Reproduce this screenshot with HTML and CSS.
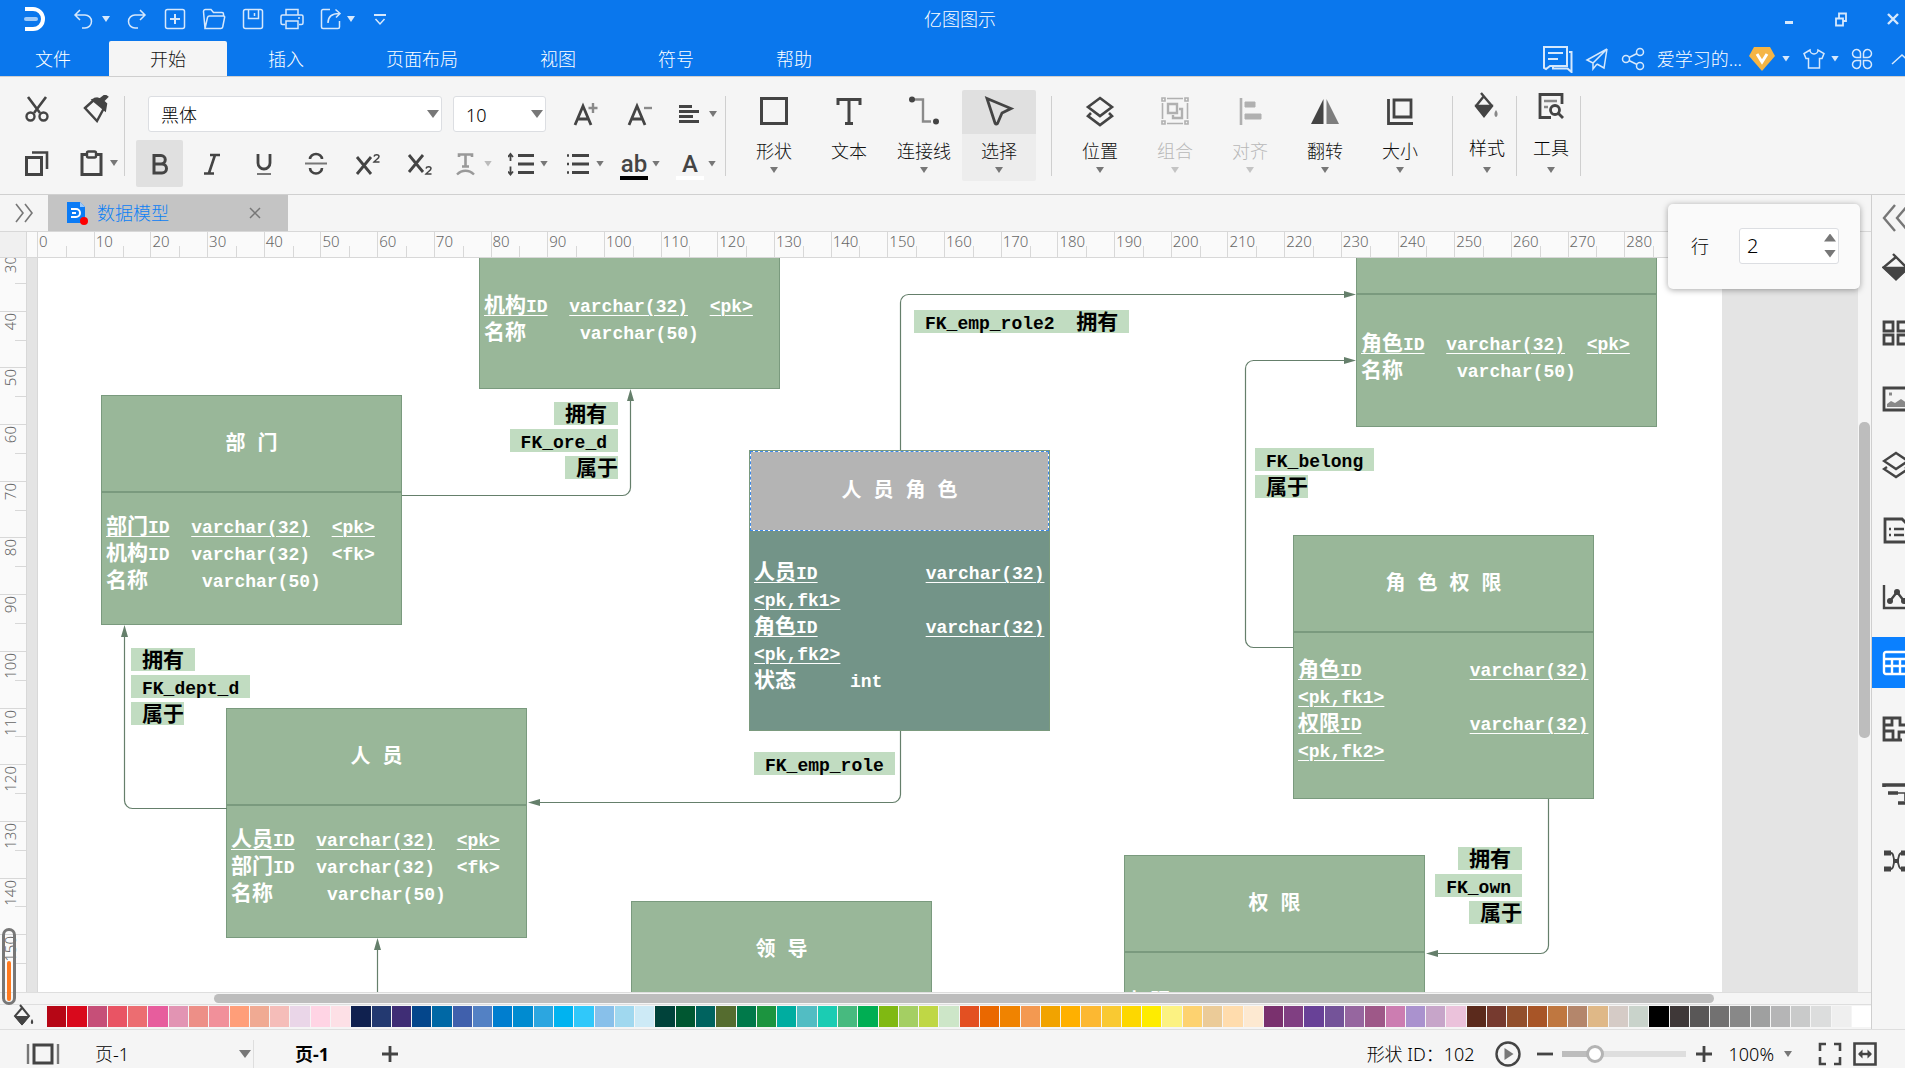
FILE: index.html
```html
<!DOCTYPE html>
<html lang="zh-CN">
<head>
<meta charset="utf-8">
<title>亿图图示</title>
<link rel="stylesheet" href="styles.css">
</head>
<body>
<header class="header">
  <div class="titlebar">
    <div class="quick">
      <svg class="logo" width="24" height="26" viewBox="0 0 24 26"><path d="M1 3h8a10 10 0 0 1 0 20H1" fill="none" stroke="#fff" stroke-width="4"/><path d="M2 13h10" stroke="#9fcaf8" stroke-width="4" stroke-linecap="round"/></svg>
      <button class="q-undo" aria-label="撤销"><svg width="22" height="22" viewBox="0 0 22 22"><path d="M7 2L2 7l5 5M2 7h10a6.500 6.500 0 0 1 0 13H9"/></svg></button>
      <button class="q-caret" aria-label="撤销列表"><i class="caret light"></i></button>
      <button class="q" aria-label="重做"><svg width="22" height="22" viewBox="0 0 22 22"><path d="M15 2l5 5-5 5M20 7H10a6.500 6.500 0 0 0 0 13h3"/></svg></button>
      <button class="q" aria-label="新建"><svg width="22" height="22" viewBox="0 0 22 22"><rect x="1.500" y="1.500" width="19" height="19" rx="2"/><path d="M11 6v10M6 11h10" stroke-width="2"/></svg></button>
      <button class="q" aria-label="打开"><svg width="24" height="22" viewBox="0 0 24 22"><path d="M3 20.500L1.500 3.500a2 2 0 0 1 2-2H9l2.500 3H20a1.500 1.500 0 0 1 1.500 1.500v2M3 20.500L5.500 9.500a2 2 0 0 1 2-1.500H22l.7 1-2 10a2 2 0 0 1-2 1.500z"/></svg></button>
      <button class="q" aria-label="保存"><svg width="22" height="22" viewBox="0 0 22 22"><rect x="1.500" y="1.500" width="19" height="19" rx="2"/><path d="M6.500 2v8.500h10V2M12.500 5v3"/></svg></button>
      <button class="q" aria-label="打印"><svg width="24" height="22" viewBox="0 0 24 22"><path d="M6 7V1.500h12V7M5 16.500H2.500a1.500 1.500 0 0 1-1.500-1.500V8.500A1.500 1.500 0 0 1 2.500 7h19A1.500 1.500 0 0 1 23 8.500V15a1.500 1.500 0 0 1-1.500 1.500H19M6 13h12v7.500H6zM18 10h2"/></svg></button>
      <button class="q q-export" aria-label="导出"><svg width="22" height="22" viewBox="0 0 22 22"><path d="M10 1.500H3A1.500 1.500 0 0 0 1.500 3v16A1.500 1.500 0 0 0 3 20.500h15a1.500 1.500 0 0 0 1.500-1.500v-6M8 15c0-6 4-9.500 11-9.500M15.500 1.500L20 5.500l-4 4"/></svg></button>
      <button class="q-caret" aria-label="导出列表"><i class="caret light"></i></button>
      <button class="q-more" aria-label="自定义"><svg width="14" height="14" viewBox="0 0 14 14"><path d="M1 3h12" stroke-width="2"/><path d="M2.500 7l4.500 5 4.500-5"/></svg></button>
    </div>
    <h1 class="app-title">亿图图示</h1>
    <div class="win">
      <button aria-label="最小化"><svg width="24" height="20" viewBox="0 0 24 20"><path d="M8 13.500h8" stroke-width="3"/></svg></button>
      <button aria-label="还原"><svg width="24" height="20" viewBox="0 0 24 20"><path d="M7 9.500h7v7H7zM10 9V4.500h7V12h-3" stroke-width="1.800"/></svg></button>
      <button aria-label="关闭"><svg width="24" height="20" viewBox="0 0 24 20"><path d="M7 5l10 10M17 5L7 15" stroke-width="2.400"/></svg></button>
    </div>
  </div>
  <div class="menubar">
    <nav class="tabs">
      <a class="tab file" href="#file">文件</a>
      <a class="tab active" href="#home">开始</a>
      <a class="tab" href="#insert">插入</a>
      <a class="tab" href="#layout">页面布局</a>
      <a class="tab" href="#view">视图</a>
      <a class="tab" href="#symbol">符号</a>
      <a class="tab" href="#help">帮助</a>
    </nav>
    <div class="account">
      <button aria-label="评论"><svg width="31" height="28" viewBox="0 0 31 28"><path d="M2 2h23v19H8l-4 3-2-1z" stroke-width="2"/><path d="M6 8h15M6 14h10" stroke-width="2.200"/><path d="M27 7h2.500v20l-4-3.500H11V21" stroke-width="2"/></svg></button>
      <button aria-label="发送"><svg width="24" height="24" viewBox="0 0 24 24"><path d="M22 2L2 13l6 3zM22 2l-3 19-7-4M22 2L8 16M8 16v6l4-5"/></svg></button>
      <button aria-label="分享"><svg width="24" height="24" viewBox="0 0 24 24"><circle cx="5" cy="12" r="3.500"/><circle cx="19" cy="5" r="3.500"/><circle cx="19" cy="19" r="3.500"/><path d="M8 10.500l8-4M8 13.500l8 4"/></svg></button>
      <button class="user">爱学习的...<svg width="28" height="26" viewBox="0 0 28 26"><path d="M6 1h16l5 9-13 15L1 10z" fill="#f5b545" stroke="none"/><path d="M9 8l5 8 5-8" stroke="#fff" stroke-width="3"/></svg><i class="caret light"></i></button>
      <button class="skin" aria-label="皮肤"><svg width="24" height="24" viewBox="0 0 24 24"><path d="M8 3L2 6.500l2 5h2.500V21h11v-9.500H20l2-5L16 3a4 4 0 0 1-8 0z"/></svg><i class="caret light"></i></button>
      <button aria-label="应用"><svg width="22" height="22" viewBox="0 0 22 22"><path d="M9.500 9.500H6a4 4 0 1 1 3.500-4zM12.500 9.500H16a4 4 0 1 0-3.500-4zM9.500 12.500H6a4 4 0 1 0 3.500 4zM12.500 12.500H16a4 4 0 1 1-3.500 4z"/></svg></button>
      <button class="collapse" aria-label="收起"><svg width="14" height="14" viewBox="0 0 14 14"><path d="M1 12L11 3l10 9"/></svg></button>
    </div>
  </div>
</header>

<section class="ribbon" aria-label="开始">
  <div class="group clip">
    <button aria-label="剪切"><svg width="28" height="28" viewBox="0 0 28 28"><path d="M5 2l12 16M23 2L11 18" stroke-width="2.600"/><circle cx="7.500" cy="21.500" r="4"/><circle cx="20.500" cy="21.500" r="4"/></svg></button>
    <button aria-label="格式刷"><svg width="28" height="28" viewBox="0 0 28 28"><path d="M4 13L14 4l9 9-7 13z"/><path d="M12 5l12 10 1-6-3-3 4-4-2-1.500-5 4-3-1z" fill="#444"/></svg></button>
    <button aria-label="复制"><svg width="28" height="28" viewBox="0 0 28 28"><path d="M3.500 8.500h15v17h-15z" stroke-width="3"/><path d="M9 3.500h15V20" stroke-width="2.600"/></svg></button>
    <button class="drop" aria-label="粘贴"><svg width="28" height="28" viewBox="0 0 28 28"><path d="M9 5.500H4v20h19v-20h-5" stroke-width="3"/><rect x="9" y="2.500" width="9" height="6" rx="1.500"/></svg><i class="caret"></i></button>
  </div>
  <div class="group font">
    <div class="row fields">
      <label class="field name"><select aria-label="字体"><option>黑体</option></select><i class="caret large"></i></label>
      <label class="field size"><select aria-label="字号"><option>10</option></select><i class="caret large"></i></label>
      <button aria-label="增大字号"><svg width="28" height="28" viewBox="0 0 28 28"><path d="M3 25L11 6l8 19M6 19h10" stroke-width="2.800"/><path d="M21 3v10M16.500 8h9" stroke="#8a8a8a" stroke-width="2.400"/></svg></button>
      <button aria-label="减小字号"><svg width="28" height="28" viewBox="0 0 28 28"><path d="M3 25L11 6l8 19M6 19h10" stroke-width="2.800"/><path d="M18 8h8" stroke="#8a8a8a" stroke-width="2.400"/></svg></button>
      <button class="drop align" aria-label="对齐方式"><svg width="28" height="28" viewBox="0 0 28 28"><path d="M2 6.500h13M2 11.500h20M2 16.500h14M2 21.500h20" stroke-width="2.800"/></svg><i class="caret"></i></button>
    </div>
    <div class="row styles">
      <button class="fmt on" aria-label="加粗"><svg width="28" height="28" viewBox="0 0 28 28"><path d="M8 5.500h7a4 4 0 0 1 0 8.500H8zM8 14h8a4.500 4.500 0 0 1 0 9H8z" stroke-width="3"/></svg></button>
      <button class="fmt" aria-label="斜体"><svg width="28" height="28" viewBox="0 0 28 28"><path d="M12 5h10M6 23.500h10M17 5l-6 18" stroke-width="2.600"/></svg></button>
      <button class="fmt" aria-label="下划线"><svg width="28" height="28" viewBox="0 0 28 28"><path d="M8 4v9a6 6 0 0 0 12 0V4" stroke-width="2.800"/><path d="M7 24h14" stroke="#777" stroke-width="2"/></svg></button>
      <button class="fmt" aria-label="删除线"><svg width="28" height="28" viewBox="0 0 28 28"><path d="M20 9a6 5 0 0 0-12 0M8 18a6 5.500 0 0 0 12 0" stroke-width="2.600"/><path d="M3 13.500h22" stroke="#777" stroke-width="2"/></svg></button>
      <button class="fmt" aria-label="上标"><svg width="28" height="28" viewBox="0 0 28 28"><path d="M3 7l14 17M17 7L3 24" stroke-width="2.800"/><path d="M20 6.500c.5-2.500 5-2.500 5 0 0 2-3 3-5 5.500h5.500" stroke-width="1.500"/></svg></button>
      <button class="fmt" aria-label="下标"><svg width="28" height="28" viewBox="0 0 28 28"><path d="M3 5l14 17M17 5L3 22" stroke-width="2.800"/><path d="M20 18.500c.5-2.500 5-2.500 5 0 0 2-3 3-5 5.500h5.500" stroke-width="1.500"/></svg></button>
      <div class="drops">
        <button class="drop dim" aria-label="文字方向"><svg width="28" height="28" viewBox="0 0 28 28"><path d="M7 7V4.500h13V7M13.500 4v12M10 16.500h7" stroke="#999" stroke-width="2.600"/><path d="M5 24.500c5-5 12-5 17 0" stroke="#999"/></svg><i class="caret"></i></button>
        <button class="drop" aria-label="行距"><svg width="28" height="28" viewBox="0 0 28 28"><path d="M10 5.500h16M10 14h16M10 22.500h16" stroke-width="2.800"/><path d="M2.500 4v7M0 7l2.500-3L5 7M2.500 16.500v8M0 21.500l2.500 3 2.500-3" stroke-width="1.800"/></svg><i class="caret"></i></button>
        <button class="drop" aria-label="项目符号"><svg width="28" height="28" viewBox="0 0 28 28"><path d="M8 5.500h17M8 14h17M8 22.500h17" stroke-width="2.800"/><path d="M3 5.500h2M3 14h2M3 22.500h2" stroke-width="2.600"/></svg><i class="caret"></i></button>
        <button class="drop letters" aria-label="突出显示"><span class="glyph black">ab</span><i class="caret"></i></button>
        <button class="drop letters" aria-label="字体颜色"><span class="glyph white">A</span><i class="caret"></i></button>
      </div>
    </div>
  </div>
  <div class="group tools">
    <button class="tool"><svg width="32" height="32" viewBox="0 0 32 32"><path d="M3.500 3.500h25v25h-25z" stroke-width="3"/></svg><span>形状</span><i class="caret"></i></button>
    <button class="tool"><svg width="32" height="32" viewBox="0 0 32 32"><path d="M5 10V4.500h22V10M16 4v24M12 28.500h8" stroke-width="3"/></svg><span>文本</span></button>
    <button class="tool"><svg width="32" height="32" viewBox="0 0 32 32"><path d="M6 4.500h9v22h8" stroke="#8a8a8a" stroke-width="2.400"/><circle cx="4" cy="4.500" r="3" fill="#444" stroke="none"/><circle cx="28" cy="26.500" r="3" fill="#444" stroke="none"/></svg><span>连接线</span><i class="caret"></i></button>
    <button class="tool selected"><svg width="32" height="32" viewBox="0 0 32 32"><path d="M4 3.500l24 10-9 4.500-4.500 10.500q-1.500 1.500-2.500-.5z" stroke-width="2.800"/></svg><span>选择</span><i class="caret"></i></button>
  </div>
  <div class="group tools">
    <button class="tool"><svg width="32" height="32" viewBox="0 0 32 32"><path d="M16 3l12 9-12 9-12-9z" stroke-width="2.600"/><path d="M7 18l-3 3 12 9 12-9-3-3" stroke-width="2.600"/></svg><span>位置</span><i class="caret"></i></button>
    <button class="tool off" disabled><svg width="32" height="32" viewBox="0 0 32 32"><path d="M3 3h3v3H3zM26 3h3v3h-3zM3 26h3v3H3zM26 26h3v3h-3zM8 3.500h16M8 28.500h16M3.500 8v16M28.500 8v16" stroke-width="1.600"/><path d="M9 9h9v9H9zM20 14h3v9h-9v-3" stroke-width="2.400"/></svg><span>组合</span><i class="caret"></i></button>
    <button class="tool off" disabled><svg width="32" height="32" viewBox="0 0 32 32"><path d="M7 3v27" stroke-width="2.600"/><path d="M11 7h10v5H11zM11 19h16v5H11z" fill="#b0b0b0" stroke-width="1"/></svg><span>对齐</span><i class="caret"></i></button>
    <button class="tool"><svg width="32" height="32" viewBox="0 0 32 32"><path d="M14.500 4v25H2z" fill="#444" stroke="none"/><path d="M17.500 4v25H30z" fill="#7d7d7d" stroke="none"/></svg><span>翻转</span><i class="caret"></i></button>
    <button class="tool"><svg width="32" height="32" viewBox="0 0 32 32"><path d="M4.500 4v24.500H29" stroke-width="2.800"/><path d="M10 5h17v17H10z" stroke-width="2.800"/></svg><span>大小</span><i class="caret"></i></button>
  </div>
  <div class="group tools slim">
    <button class="tool"><svg width="28" height="28" viewBox="0 0 28 28"><path d="M8 1l11 13-8 10-8-10 8-10" stroke-width="2.400"/><path d="M4 14h14l-7 9z" fill="#444"/><path d="M23 18c3 4 1 7 0 7s-3-3 0-7z" fill="#888" stroke="none"/></svg><span>样式</span><i class="caret"></i></button>
  </div>
  <div class="group tools slim">
    <button class="tool"><svg width="28" height="28" viewBox="0 0 28 28"><path d="M25 12V2.500H3v23h11" stroke-width="2.800"/><path d="M7 9h13M7 15h4" stroke="#888" stroke-width="2.600"/><circle cx="18" cy="18" r="4.500" stroke-width="2.800"/><path d="M21 21l5 5" stroke-width="2.800"/></svg><span>工具</span><i class="caret"></i></button>
  </div>
</section>

<main class="work">
  <div class="editor">
    <div class="doc-tabs">
      <button class="expand" aria-label="展开"><svg width="20" height="20" viewBox="0 0 20 20"><path d="M2 1l7 9-7 9M11 1l7 9-7 9"/></svg></button>
      <div class="doc-tab">
        <svg width="24" height="24" viewBox="0 0 24 24"><path d="M3 1h13l5 5v16H3z" fill="#0b7bf5"/><path d="M16 1l5 5h-5z" fill="#9fcaf8"/><path d="M7 8h5a4 4 0 0 1 0 8H7M8 12h4" fill="none" stroke="#fff" stroke-width="2"/><circle cx="20" cy="20" r="4" fill="#f00"/></svg>
        <a href="#doc">数据模型</a>
        <button aria-label="关闭文档"><svg width="12" height="12" viewBox="0 0 12 12"><path d="M1 1l10 10M11 1L1 11"/></svg></button>
      </div>
    </div>
    <div class="rulers-top"><div class="corner"></div><ol class="ruler-h" id="ruler-h"></ol></div>
    <div class="view">
      <ol class="ruler-v" id="ruler-v"></ol>
      <div class="canvas">
        <div class="sheet">
          <section class="node two-rows n-org"><h2>机 构</h2><pre><u><b>机构</b>ID</u>  <u>varchar(32)</u>  <u>&lt;pk&gt;</u>
<b>名称</b>     varchar(50)</pre></section>
          <section class="node n-dept"><h2>部 门</h2><pre><u><b>部门</b>ID</u>  <u>varchar(32)</u>  <u>&lt;pk&gt;</u>
<b>机构</b>ID  varchar(32)  &lt;fk&gt;
<b>名称</b>     varchar(50)</pre></section>
          <section class="node n-emprole"><h2>人 员 角 色</h2><pre><u><b>人员</b>ID</u>          <u>varchar(32)</u>
<u>&lt;pk,fk1&gt;</u>
<u><b>角色</b>ID</u>          <u>varchar(32)</u>
<u>&lt;pk,fk2&gt;</u>
<b>状态</b>     int</pre></section>
          <section class="node n-emp"><h2>人 员</h2><pre><u><b>人员</b>ID</u>  <u>varchar(32)</u>  <u>&lt;pk&gt;</u>
<b>部门</b>ID  varchar(32)  &lt;fk&gt;
<b>名称</b>     varchar(50)</pre></section>
          <section class="node two-rows n-role"><h2>角 色</h2><pre><u><b>角色</b>ID</u>  <u>varchar(32)</u>  <u>&lt;pk&gt;</u>
<b>名称</b>     varchar(50)</pre></section>
          <section class="node n-roleperm"><h2>角 色 权 限</h2><pre><u><b>角色</b>ID</u>          <u>varchar(32)</u>
<u>&lt;pk,fk1&gt;</u>
<u><b>权限</b>ID</u>          <u>varchar(32)</u>
<u>&lt;pk,fk2&gt;</u></pre></section>
          <section class="node n-lead"><h2>领 导</h2></section>
          <section class="node two-rows n-perm"><h2>权 限</h2><pre><u><b>权限</b>ID</u>  <u>varchar(32)</u>  <u>&lt;pk&gt;</u>
<b>名称</b>     varchar(50)</pre></section>

          <svg class="wires" width="1684" height="760" viewBox="38 258 1684 760">
            <path d="M402 495.500H622.500a8 8 0 0 0 8-8V398M227 808.500H132.500a8 8 0 0 1-8-8V634M900.500 450V302.500a8 8 0 0 1 8-8H1346M900.500 731V794.500a8 8 0 0 1-8 8H538M1293 647.500H1253.500a8 8 0 0 1-8-8V368.500a8 8 0 0 1 8-8H1346M1548.500 799V945.500a8 8 0 0 1-8 8H1436M377.500 1018V948"/>
            <path class="heads" d="M630.500 389l3.500 12h-7zM124.500 625l3.500 12h-7zM1356 294.500l-12-3.500v7zM528 802.500l12-3.500v7zM1356 360.500l-12-3.500v7zM1426 953.500l12-3.500v7zM377.500 938l3.500 12h-7z"/>
          </svg>

          <div class="tag right t-org"><span>拥有</span><span><code>FK_ore_d</code></span><span class="tight">属于</span></div>
          <div class="tag t-dept"><span>拥有</span><span><code>FK_dept_d</code></span><span class="tight">属于</span></div>
          <div class="tag t-emprole"><span><code>FK_emp_role</code></span></div>
          <div class="tag t-emprole2"><span><code>FK_emp_role2  </code>拥有</span></div>
          <div class="tag t-belong"><span><code>FK_belong</code></span><span class="tight">属于</span></div>
          <div class="tag right t-own"><span>拥有</span><span><code>FK_own</code></span><span class="tight">属于</span></div>
        </div>
      </div>
      <div class="vscroll"><div class="thumb"></div></div>
      <div class="level"><div class="level-bar"></div></div>
    </div>
    <div class="hscroll"><div class="thumb"></div></div>
    <div class="palette">
      <button class="fill" aria-label="填充"><svg width="24" height="24" viewBox="0 0 24 24"><path d="M8 1l9 11-7 8-7-8 7-8" stroke-width="2"/><path d="M3 12.500h14L10 21z" fill="#444" stroke-width="1"/><path d="M20 15c2 3 1 5 0 5s-2-2 0-5z" fill="#444" stroke="none"/></svg></button>
      <div class="swatches" id="swatches"></div>
    </div>
    <form class="popup">
      <label for="rows">行</label>
      <div class="spin"><input id="rows" type="number" value="2"><div class="steps"><button type="button" aria-label="增加"><i class="caret large up"></i></button><button type="button" aria-label="减少"><i class="caret large"></i></button></div></div>
    </form>
  </div>
  <aside class="side">
    <button class="back" aria-label="展开面板"><svg width="30" height="28" viewBox="0 0 30 28"><path d="M13 1L2 14l11 13M26 1L15 14l11 13" stroke="#777"/></svg></button>
    <button aria-label="填充"><svg width="28" height="28" viewBox="0 0 28 28"><path d="M11 1l14 14-11 11L2 14 14 4"/><path d="M2 15h24L14 26z" fill="#444"/></svg></button>
    <button aria-label="符号库"><svg width="28" height="28" viewBox="0 0 28 28"><path d="M2 3h9v9H2zM16 3h9v9h-9zM2 16h9v9H2zM16 16h9v9h-9z" stroke-width="2.800"/></svg></button>
    <button aria-label="图片"><svg width="28" height="28" viewBox="0 0 28 28"><path d="M2 3h24v22H2z" stroke-width="2.800"/><path d="M5 22v-3l4-3 4 2 6-4 7 5v3z" fill="#888" stroke="none"/><path d="M7 9h3" stroke="#888" stroke-width="3"/></svg></button>
    <button aria-label="图层"><svg width="28" height="28" viewBox="0 0 28 28"><path d="M14 2l12 8-12 8-12-8z"/><path d="M5 16l-3 2 12 8 12-8-3-2"/></svg></button>
    <button aria-label="备注"><svg width="28" height="28" viewBox="0 0 28 28"><path d="M3 2h17l5 5v18H3z" stroke-width="2.800"/><path d="M7 12h2M7 18h2M12 12h10M12 18h10"/></svg></button>
    <button aria-label="图表"><svg width="28" height="28" viewBox="0 0 28 28"><path d="M2 2v23h26M8 18l7-9 7 9"/><circle cx="8" cy="18" r="3" fill="#444" stroke="none"/><circle cx="15" cy="9" r="3" fill="#444" stroke="none"/><circle cx="22" cy="18" r="3" fill="#444" stroke="none"/></svg></button>
    <button class="on" aria-label="表格"><svg width="28" height="28" viewBox="0 0 28 28"><rect x="2" y="3" width="26" height="22" rx="2"/><path d="M2 10h26M2 17h26M10 10v15M18 10v15"/></svg></button>
    <button aria-label="排列"><svg width="28" height="28" viewBox="0 0 28 28"><path d="M20 25H2V3h16v7h8M2 10h8V3M2 16h9v9M17 25v-8h9" stroke-width="2.800"/></svg></button>
    <button aria-label="甘特图"><svg width="28" height="28" viewBox="0 0 28 28"><path d="M2 6V4h24M6 12h10M16 22h12" stroke-width="3.600"/><path d="M15 12h8v8" stroke-width="1.600"/></svg></button>
    <button aria-label="脑图"><svg width="28" height="28" viewBox="0 0 28 28"><path d="M2 6h7M2 22h7M19 6h8M19 22h8" stroke-width="5"/><path d="M9 6c4 0 1 8 5 8s1-8 6-8M9 22c4 0 1-8 5-8s1 8 6 8" stroke-width="1.800"/><path d="M11 14h6" stroke-width="4"/></svg></button>
  </aside>
</main>

<footer class="status">
  <button class="pages" aria-label="页面视图"><svg width="34" height="24" viewBox="0 0 34 24"><path d="M8 3h18v18H8z" stroke-width="3"/><path d="M2 2v20M32 2v20" stroke="#777" stroke-width="2.400"/></svg></button>
  <label class="page-pick"><select aria-label="页面"><option>页-1</option></select><i class="caret large"></i></label>
  <a class="page-tab" href="#page1">页-1</a>
  <button class="add" aria-label="添加页面"><svg width="18" height="18" viewBox="0 0 18 18"><path d="M9 1v16M1 9h16" stroke-width="2.800"/></svg></button>
  <span class="shape-id">形状 ID：102</span>
  <button aria-label="播放"><svg width="26" height="26" viewBox="0 0 26 26"><circle cx="13" cy="13" r="11.500"/><path d="M9.500 7l9 6-9 6z" fill="#777" stroke="none"/></svg></button>
  <button class="zoom-out" aria-label="缩小"><svg width="16" height="16" viewBox="0 0 16 16"><path d="M0 8h16" stroke-width="2.800"/></svg></button>
  <input class="zoom" type="range" min="0" max="100" value="23" aria-label="缩放">
  <button aria-label="放大"><svg width="16" height="16" viewBox="0 0 16 16"><path d="M8 0v16M0 8h16" stroke-width="2.800"/></svg></button>
  <button class="percent">100%<i class="caret"></i></button>
  <button class="full" aria-label="全屏"><svg width="24" height="24" viewBox="0 0 24 24"><path d="M2 9V2h6M16 2h6v7M22 15v7h-6M8 22H2v-7" stroke-width="2.600"/></svg></button>
  <button aria-label="适应宽度"><svg width="24" height="24" viewBox="0 0 24 24"><path d="M1.500 1.500h21v21h-21z" stroke-width="2.600"/><path d="M6 12h12"/><path d="M9.500 7.500L5 12l4.500 4.500zM14.500 7.500L19 12l-4.500 4.500z" fill="#444" stroke="none"/></svg></button>
</footer>
<script src="script.js"></script>
</body>
</html>
```
FILE: styles.css
```css
* { box-sizing: border-box; }

body {
  margin: 0;
  height: 100vh;
  display: flex;
  flex-direction: column;
  overflow: hidden;
  background: #f5f5f5;
  color: #111;
  font: 300 18px/24px "Noto Sans", "Noto Sans CJK SC", sans-serif;
}

button, select, input { font: inherit; color: inherit; }
button { border: 0; padding: 0; background: none; display: flex; align-items: center; justify-content: center; }
a { color: inherit; text-decoration: none; }
h1, h2, pre, ol { margin: 0; padding: 0; list-style: none; }
svg { flex: none; display: block; fill: none; stroke: #444; stroke-width: 2.4; }
i { font-style: normal; }

.caret { flex: none; width: 8px; height: 6px; background: #777; clip-path: polygon(0 0, 100% 0, 50% 100%); }
.caret.large { width: 12px; height: 8px; }
.caret.light { background: #d6e8fc; }
.caret.up { clip-path: polygon(50% 0, 100% 100%, 0 100%); }

/* header */
.header { flex: none; background: #0a77ed; color: #fff; border-bottom: 1px solid #cfcfcf; }
.header svg { stroke: #d6e8fc; stroke-width: 1.5; }
.titlebar { height: 41px; padding: 0 0 3px 15px; display: grid; grid-template-columns: 1fr auto 1fr; align-items: center; }
.quick { display: flex; align-items: center; height: 36px; }
.logo { margin: 0 24px 0 9px; }
.q-undo { width: 24px; }
.q-caret { width: 20px; }
.q { width: 39px; }
.q-export { margin-right: -9px; }
.q-more { width: 38px; }
.app-title { font-size: 18px; font-weight: 300; }
.win { display: flex; justify-content: flex-end; gap: 28px; }
.menubar { display: flex; justify-content: space-between; height: 35px; overflow: hidden; }
.tabs { display: flex; }
.tab { padding: 6px 41px 0; border-radius: 2px 2px 0 0; }
.tab.file { padding: 6px 38px 0 35px; }
.tab.active { background: #f5f5f5; color: #111; }
.account { display: flex; align-items: center; gap: 12px; }
.user { gap: 6px; }
.skin { gap: 5px; }
.collapse { margin-left: 6px; }

/* ribbon */
.ribbon { flex: none; height: 118px; padding-top: 13px; display: flex; border-bottom: 1px solid #d0d0d0; }
.group { position: relative; height: 98px; }
.group::after { content: ""; position: absolute; right: 0; top: 6px; height: 80px; width: 1px; background: #cfcfcf; }
.clip { width: 125px; padding-left: 20px; display: grid; grid-template-columns: 58px 44px; grid-template-rows: 37px 72px; align-items: center; justify-items: start; }
.clip button { min-width: 34px; }
.drop { gap: 4px; }
.font { width: 601px; display: flex; flex-direction: column; gap: 8px; padding: 6px 9px 0 11px; }
.row { display: flex; align-items: center; }
.fields { height: 36px; padding-left: 12px; gap: 26px; }
.align { margin-left: -3px; }
.field { position: relative; display: flex; align-items: center; height: 36px; background: #fff; border: 1px solid #dcdee2; border-radius: 3px; }
.field .caret { position: absolute; right: 2px; }
.field.name { width: 294px; margin-right: -15px; }
.field.size { width: 93px; }
.field select { appearance: none; width: 100%; height: 34px; border: 0; background: none; padding: 2px 12px 0; color: #000; }
.fmt { width: 47px; height: 47px; margin-right: 5px; border-radius: 2px; }
.fmt.on { background: #e0e0e0; }
.drops { display: flex; gap: 16px; padding-left: 4px; }
.drops .drop { width: 40px; }
.dim .caret { background: #bbb; }
.letters .glyph { width: 28px; height: 32px; font: 500 24px/32px Roboto, sans-serif; color: #444; border-bottom: 4px solid; text-align: center; }
.letters .black { border-color: #000; }
.letters .white { border-color: #fff; }
.tools { display: flex; padding: 0 16px 0 11px; gap: 1px; }
.tool { width: 74px; height: 91px; flex-direction: column; justify-content: flex-start; padding-top: 5px; border-radius: 2px; }
.tool span { margin-top: 12px; }
.tool .caret { margin-top: 4px; }
.tool.selected { background: linear-gradient(#e0e0e0 44px, #ededed 44px); }
.tool.off { color: #b8b8b8; }
.tool.off svg { stroke: #b0b0b0; }
.tool.off .caret { background: #c4c4c4; }
.tools.slim { padding: 0 0 0 5px; width: 64px; }
.slim .tool { width: 58px; padding-top: 2px; color: #000; }
.slim .tool span { margin-top: 16px; }
.slim .tool .caret { margin-top: 7px; }

/* work area */
.work { flex: 1; min-height: 0; display: flex; }
.editor { position: relative; flex: 1; min-width: 0; display: flex; flex-direction: column; }
.doc-tabs { flex: none; display: flex; height: 37px; border-bottom: 1px solid #d8d8d8; }
.expand { width: 48px; }
.expand svg { stroke: #777; stroke-width: 1.6; }
.doc-tab { display: flex; align-items: center; gap: 9px; width: 240px; padding: 0 27px 0 16px; background: #c4c4c4; color: #0b80f5; }
.doc-tab svg { stroke: none; }
.doc-tab button { margin-left: auto; }
.doc-tab button svg { stroke: #777; stroke-width: 1.5; }

.rulers-top { flex: none; display: flex; height: 26px; overflow: hidden; border-bottom: 1px solid #d8d8d8; background: #fafafa; margin-right: 13px; }
.corner { flex: none; width: 27px; background: #f0f0f0; border-right: 1px solid #d8d8d8; }
.ruler-h { flex: 1; display: flex; padding-left: 10px; overflow: hidden; }
.ruler-h li, .ruler-v li { flex: none; position: relative; color: #666; font-size: 15px; line-height: 18px; }
.ruler-h li { width: 15mm; padding-left: 1px; border-left: 1px solid #d8d8d8; }
.ruler-h li::after { content: ""; position: absolute; left: 50%; bottom: 0; width: 1px; height: 11px; background: #d8d8d8; }
.view { position: relative; flex: 1; min-height: 0; display: flex; }
.ruler-v { flex: none; width: 27px; overflow: hidden; background: #fafafa; border-right: 1px solid #d8d8d8; }
.ruler-v li { height: 15mm; padding: 1px 0 0 1px; border-top: 1px solid #d8d8d8; }
.ruler-v li:first-child { margin-top: -4px; }
.ruler-v li::after { content: ""; position: absolute; right: 0; top: 50%; width: 11px; height: 1px; background: #d8d8d8; }
.ruler-v span { display: block; writing-mode: sideways-lr; }

/* drawing */
.canvas { flex: 1; min-width: 0; overflow: hidden; padding-left: 10px; background: #e4e4e4; }
.sheet { position: relative; width: 1685px; height: 100%; overflow: hidden; background: #fff; border-left: 1px solid #d8d8d8; }
.wires { position: absolute; left: 0; top: 0; stroke: #657f6b; stroke-width: 1.2; }
.wires .heads { fill: #657f6b; stroke: none; }
.node { position: absolute; width: 301px; height: 230px; background: #99b799; border: 1px solid #7a9a7e; color: #fff; }
.node h2 { height: 97px; border-bottom: 2px solid #7a9a7e; font: 700 20px/98px "Liberation Mono", "Noto Sans CJK SC", monospace; text-align: center; }
.node pre { padding: 22px 0 0 4px; font: 700 18px/27px "Liberation Mono", monospace; }
.node b { font: 700 21px/1px "Noto Sans CJK SC", sans-serif; }
.node u { text-decoration-thickness: 1px; text-underline-offset: 3px; }
.two-rows pre { padding-top: 37px; }
.n-org { left: 441px; top: -99px; }
.n-dept { left: 63px; top: 137px; }
.n-emprole { left: 711px; top: 192px; height: 281px; background: #739488; }
.n-emprole h2 { height: 80px; border: 1px dashed #3f8ae8; line-height: 79px; background: linear-gradient(#b4b4b4, #b4b4b4) padding-box, #fff border-box; }
.n-emprole pre { padding-top: 30px; }
.n-emp { left: 188px; top: 450px; }
.n-role { left: 1318px; top: -61px; }
.n-roleperm { left: 1255px; top: 277px; height: 264px; }
.n-roleperm pre { padding-top: 25px; }
.n-lead { left: 593px; top: 643px; }
.n-perm { left: 1086px; top: 597px; }

.tag { position: absolute; display: flex; flex-direction: column; align-items: flex-start; gap: 4px; color: #000; font: 700 21px/20px "Noto Sans CJK SC", sans-serif; }
.tag.right { align-items: flex-end; }
.tag span { height: 23px; padding: 0 11px; background: #c1dcc1; white-space: pre; }
.tag .tight { padding-right: 0; }
.tag code { font: 700 18px/1px "Liberation Mono", monospace; }
.t-org { right: 1104px; top: 144px; }
.t-dept { left: 93px; top: 390px; }
.t-emprole { left: 716px; top: 494px; }
.t-emprole2 { left: 876px; top: 52px; }
.t-belong { left: 1217px; top: 190px; }
.t-own { right: 200px; top: 589px; }

.vscroll { flex: none; width: 13px; padding: 164px 1px 0; }
.vscroll .thumb { height: 316px; border-radius: 5px; background: #bdbdbd; }
.level { position: absolute; left: 2px; bottom: -13px; width: 14px; height: 77px; padding: 30px 2px 1px; border: 3px solid #777; border-radius: 7px; z-index: 1; }
.level-bar { width: 4px; height: 40px; border-radius: 2px; background: #ff7a1f; }
.hscroll { flex: none; height: 13px; border: solid #dedede; border-width: 1px 0; padding: 1px 157px 1px 214px; }
.hscroll .thumb { height: 9px; border-radius: 5px; background: #bdbdbd; }
.palette { flex: none; display: flex; height: 24px; padding-bottom: 2px; align-items: center; }
.fill { width: 47px; }
.swatches { flex: 1; display: flex; gap: 1px; }
.swatches button { flex: 1; height: 21px; }

.popup { position: absolute; right: 11px; top: 9px; width: 192px; height: 85px; padding: 0 21px 2px 23px; display: flex; align-items: center; justify-content: space-between; background: #fafafa; border-radius: 5px; box-shadow: 0 1px 6px rgba(0, 0, 0, .35); color: #000; }
.spin { display: flex; width: 100px; height: 36px; background: #fff; border: 1px solid #dcdee2; border-radius: 3px; }
.spin input { flex: 1; min-width: 0; border: 0; padding: 0 7px; background: none; appearance: textfield; font-size: 20px; }
.spin input::-webkit-inner-spin-button { appearance: none; }
.steps { display: flex; flex-direction: column; justify-content: center; gap: 8px; padding-right: 2px; }

.side { flex: none; width: 34px; overflow: hidden; border-left: 1px solid #cfcfcf; display: flex; flex-direction: column; gap: 15px; }
.side button { flex: none; width: 49px; height: 51px; padding-left: 10px; justify-content: flex-start; }
.side .back { height: 46px; margin-bottom: -15px; }
.side .on { background: #0a80ff; }
.side .on svg { stroke: #fff; }

/* status */
.status { flex: none; display: flex; align-items: center; height: 39px; padding: 10px 28px 0 26px; border-top: 1px solid #dedede; color: #000; }
.page-pick { position: relative; display: flex; align-items: center; width: 194px; height: 28px; border-right: 1px solid #dedede; }
.page-pick select { appearance: none; width: 100%; border: 0; padding: 0 35px; background: none; }
.page-pick .caret { position: absolute; right: 2px; }
.page-tab { margin-left: 41px; font-weight: 700; }
.add { margin-left: 52px; }
.shape-id { margin: 0 20px 0 auto; }
.zoom-out { margin: 0 9px 0 16px; }
.zoom { appearance: none; width: 124px; height: 20px; margin: 0 10px 0 0; background: linear-gradient(90deg, #bdbdbd 33px, #dedede 33px) center / 100% 6px no-repeat; border-radius: 3px; }
.zoom::-webkit-slider-thumb { appearance: none; width: 18px; height: 18px; border: 3px solid #b4b4b4; border-radius: 50%; background: #fff; }
.percent { margin-left: 17px; gap: 10px; }
.full { margin: 0 11px 0 26px; }
```
FILE: script.js
```js
const colors = `b60615 d9091c c64f78 e95464 ec6d71 e75d9d e294b3 ed8f87 f1909a ff9e79 f0aa93 f5bdb9 ead6e8 ffd4e4 fde0e6
10214f 233970 3f2d75 04468b 0068a5 4060ac 5381c4 007ecf 008bd0 2ca6e0 00b3f0 30c8fa 88c0ea a0d8ef cdeaf6
00423a 005731 00635f 556c2f 00794a 1c943f 00ada0 52bdc3 1bccb3 47ba7f 00ae53 80b912 a4cf63 bfd745 cde6c8
e35022 ea6800 f08300 f39951 f1a300 ffb000 fcb832 f9c932 fdd700 feec00 fcf282 fdd270 ebcb98 ffdcad fde9d1
7a316e 803f82 684197 745399 96669f 9e5888 cc7db1 aa92ce c7a5c9 ebc2db 5b2a1c 763a2f 924f2c a85527 bf7740
b4866b dfb887 d5cbc6 c9d3cb 000000 3f3838 595757 727171 888888 9fa0a0 b5b5b6 c9caca dcdddd efefef ffffff`.split(/\s+/);

const swatches = document.getElementById('swatches');
for (const color of colors) {
  const button = document.createElement('button');
  button.setAttribute('aria-label', '#' + color);
  button.style.backgroundColor = '#' + color;
  swatches.append(button);
}

function fillRuler(id, from, to) {
  const ruler = document.getElementById(id);
  for (let value = from; value <= to; value += 10) {
    const item = document.createElement('li');
    const label = document.createElement('span');
    label.textContent = value;
    item.append(label);
    ruler.append(item);
  }
}

fillRuler('ruler-h', 0, 280);
fillRuler('ruler-v', 30, 150);
```
